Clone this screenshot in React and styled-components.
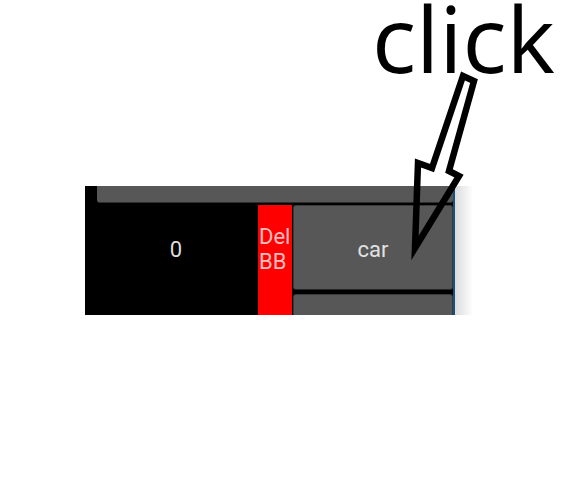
import React from "react";
import styled, { createGlobalStyle } from "styled-components";

const GlobalStyle = createGlobalStyle`
    html, body {
        margin: 0;
        padding: 0;
        background: #ffffff;
    }
    body {
        font-family: Roboto, "Noto Sans", sans-serif;
    }
`;

const Page = styled.div`
    position: relative;
    width: 564px;
    height: 501px;
    background: #ffffff;
    padding-top: 1px;
    box-sizing: border-box;
`;

const Shot = styled.div`
    display: flex;
    margin: 185px 0 0 85px;
`;

const Panel = styled.section`
    width: 368px;
    height: 129px;
    overflow: hidden;
    background: #000000;
    border-right: 2px solid #1d4f7c;
    display: flex;
    flex-direction: column;
`;

const Shadow = styled.div`
    width: 18px;
    height: 129px;
    background: linear-gradient(to right, rgba(0, 0, 0, 0.14), rgba(0, 0, 0, 0));
`;

const TopBar = styled.div`
    height: 16px;
    margin-left: 12px;
    background: #575757;
    border-bottom: 1px solid #2e2e2e;
    border-radius: 0 0 3px 3px;
    flex-shrink: 0;
`;

const Row = styled.div`
    display: flex;
    margin-top: 2px;
    flex: 1;
`;

const Count = styled.div`
    width: 173px;
    flex-shrink: 0;
    padding: 4px 0 0 9px;
    height: 85px;
    box-sizing: border-box;
    display: flex;
    align-items: center;
    justify-content: center;
    color: #dcdcdc;
    font-size: 22px;
`;

const DelButton = styled.div`
    width: 34px;
    flex-shrink: 0;
    background: #ff0000;
    color: rgba(255, 255, 255, 0.75);
    font-size: 22px;
    line-height: 25px;
    padding: 19px 0 0 1px;
    box-sizing: border-box;
`;

const Buttons = styled.div`
    width: 160px;
    flex-shrink: 0;
    margin-left: 1px;
    display: flex;
    flex-direction: column;
    gap: 4px;
`;

const ItemButton = styled.div`
    height: 85px;
    flex-shrink: 0;
    box-sizing: border-box;
    padding-top: 4px;
    background: #575757;
    border: 1px solid #3a3a3a;
    border-bottom: 1px solid #262626;
    border-radius: 3px;
    display: flex;
    align-items: center;
    justify-content: center;
    color: #e2e2e2;
    font-size: 22px;
`;

const Note = styled.div`
    position: absolute;
    left: 372px;
    top: 1px;
    font-family: "Open Sans", sans-serif;
    font-size: 92px;
    line-height: 0.8;
    white-space: nowrap;
    color: #000000;
`;

const Arrow = styled.svg`
    position: absolute;
    left: 0;
    top: 0;
    pointer-events: none;
`;

export default function App() {
    return (
        <Page>
            <GlobalStyle />
            <Shot>
                <Panel>
                    <TopBar />
                    <Row>
                        <Count>0</Count>
                        <DelButton>
                            Del
                            <br />
                            BB
                        </DelButton>
                        <Buttons>
                            <ItemButton>car</ItemButton>
                            <ItemButton />
                        </Buttons>
                    </Row>
                </Panel>
                <Shadow />
            </Shot>
            <Note>click</Note>
            <Arrow width="564" height="501" viewBox="0 0 564 501">
                <polygon
                    points="463,76 474,81 449,171 459,176 415,248 418,163 432,168"
                    fill="none"
                    stroke="#000"
                    strokeWidth="6.5"
                    strokeLinejoin="miter"
                />
            </Arrow>
        </Page>
    );
}
